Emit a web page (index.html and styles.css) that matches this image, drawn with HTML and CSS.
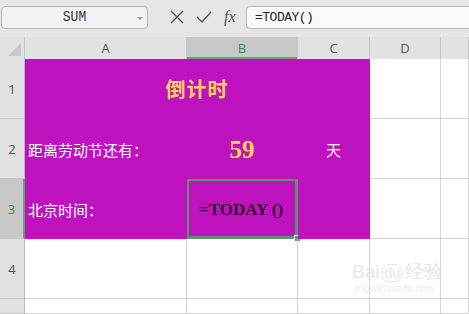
FILE: index.html
```html
<!DOCTYPE html>
<html lang="en">
<head>
    <meta charset="UTF-8" />
    <title>倒计时</title>
    <link rel="stylesheet" href="styles.css">
</head>
<body>
    <div class="toolbar">
        <div class="namebox">
            <span class="namebox__text">SUM</span>
            <span class="namebox__arrow"></span>
        </div>
        <div class="tools">
            <svg class="tool" width="16" height="16" viewBox="0 0 16 16"><path d="M2 2 L14 14 M14 2 L2 14" stroke="#555" stroke-width="1.4" fill="none"/></svg>
            <svg class="tool" width="18" height="16" viewBox="0 0 18 16"><path d="M2 8 L7 13 L16 3" stroke="#555" stroke-width="1.4" fill="none"/></svg>
            <span class="tool tool--fx">fx</span>
        </div>
        <div class="formula">=TODAY()</div>
    </div>

    <div class="sheet">
        <div class="corner"><span class="corner__tri"></span></div>
        <div class="colhead">A</div>
        <div class="colhead colhead--active">B</div>
        <div class="colhead">C</div>
        <div class="colhead">D</div>
        <div class="colhead"></div>

        <div class="rowhead">1</div>
        <div class="cell cell--fill cell--span3 cell--title">倒计时</div>
        <div class="cell"></div>
        <div class="cell"></div>

        <div class="rowhead">2</div>
        <div class="cell cell--fill cell--label">距离劳动节还有：</div>
        <div class="cell cell--fill cell--num">59</div>
        <div class="cell cell--fill cell--unit">天</div>
        <div class="cell"></div>
        <div class="cell"></div>

        <div class="rowhead rowhead--active">3</div>
        <div class="cell cell--fill cell--label">北京时间：</div>
        <div class="cell cell--fill cell--selected"><span class="cell__formula">=TODAY ()</span><span class="handle"></span></div>
        <div class="cell cell--fill"></div>
        <div class="cell"></div>
        <div class="cell"></div>

        <div class="rowhead">4</div>
        <div class="cell"></div>
        <div class="cell"></div>
        <div class="cell"></div>
        <div class="cell cell--mark">
            <span class="watermark">Bai<span class="watermark__du">du</span>经验</span>
            <span class="watermark__url">jingyan.baidu.com</span>
        </div>
        <div class="cell"></div>

        <div class="rowhead"></div>
        <div class="cell"></div>
        <div class="cell"></div>
        <div class="cell"></div>
        <div class="cell"></div>
        <div class="cell"></div>
    </div>
</body>
</html>
```

FILE: styles.css
```css
body {
    margin: 0;
    width: 469px;
    height: 314px;
    overflow: hidden;
    background: #fff;
    font-family: "Noto Sans CJK SC", sans-serif;
}

.toolbar {
    height: 37px;
    box-sizing: border-box;
    display: flex;
    align-items: center;
    padding: 0 0 3px 1px;
    background: #e6e6e6;
}

.namebox {
    width: 147px;
    height: 23px;
    box-sizing: border-box;
    display: flex;
    align-items: center;
    justify-content: center;
    position: relative;
    background: #f2f2f2;
    border: 1px solid #b9b9b9;
    border-radius: 4px;
}

.namebox__text {
    font-family: "Liberation Mono", monospace;
    font-size: 13px;
    color: #333;
    transform: scaleY(1.1);
}

.namebox__arrow {
    position: absolute;
    right: 4px;
    top: 10px;
    border-left: 3px solid transparent;
    border-right: 3px solid transparent;
    border-top: 3px solid #999;
}

.tools {
    width: 98px;
    display: flex;
    align-items: center;
    gap: 10px;
    padding-left: 21px;
    box-sizing: border-box;
}

.tool--fx {
    font-family: "Liberation Serif", serif;
    font-style: italic;
    font-size: 16px;
    color: #555;
    line-height: 16px;
    margin-left: 1px;
}

.formula {
    flex: 1;
    height: 23px;
    box-sizing: border-box;
    padding: 3px 0 0 8px;
    background: #fafafa;
    border: 1px solid #b9b9b9;
    border-right: 0;
    border-radius: 4px 0 0 4px;
    font-family: "Liberation Mono", monospace;
    font-size: 13px;
    letter-spacing: -0.5px;
    color: #222;
}

.sheet {
    display: grid;
    grid-template-columns: 25px 162px 111px 72px 71px 1fr;
    grid-template-rows: 22px 60px 60px 60px 60px 15px;
}

.corner {
    background: #e2e2e2;
    border-right: 1px solid #c4c4c4;
    position: relative;
}

.corner__tri {
    position: absolute;
    right: 3px;
    bottom: 3px;
    width: 0;
    height: 0;
    border-left: 13px solid transparent;
    border-bottom: 13px solid #c9c9c9;
}

.colhead {
    background: #e2e2e2;
    border-right: 1px solid #c8c8c8;
    display: flex;
    align-items: center;
    justify-content: center;
    font-family: "Open Sans", sans-serif;
    font-size: 13px;
    color: #555;
}

.colhead--active {
    background: #c8c8c8;
    color: #3f8a4f;
    box-shadow: inset 0 -2px 0 #6a9e73;
}

.rowhead {
    background: #e2e2e2;
    border-bottom: 1px solid #c8c8c8;
    border-right: 1px solid #b8b8b8;
    display: flex;
    align-items: center;
    justify-content: center;
    font-family: "Open Sans", sans-serif;
    font-size: 13px;
    color: #555;
}

.rowhead--active {
    background: #c8c8c8;
    color: #3f8a4f;
    border-right: 2px solid #6a9e73;
}

.cell {
    border-right: 1px solid #d4d4d4;
    border-bottom: 1px solid #d4d4d4;
    display: flex;
    align-items: center;
    position: relative;
}

.cell--fill {
    background: #bf12bf;
    border-color: #bf12bf;
}

.cell--span3 {
    grid-column: span 3;
}

.cell--title {
    justify-content: center;
    color: #f8d35a;
    font-size: 20px;
    font-weight: bold;
    letter-spacing: 1px;
}

.cell--label {
    padding-left: 3px;
    padding-top: 2px;
    color: #fff;
    font-size: 15px;
}

.cell--num {
    justify-content: center;
    padding-top: 2px;
    color: #f8d35a;
    font-family: "Liberation Serif", serif;
    font-weight: bold;
    font-size: 25px;
}

.cell--unit {
    justify-content: center;
    padding-top: 2px;
    color: #fff;
    font-size: 15px;
}

.cell--selected {
    border-color: #62906a;
    box-shadow: inset 0 0 0 2px #62906a;
}

.cell__formula {
    padding-left: 12px;
    padding-top: 2px;
    font-family: "Liberation Serif", serif;
    font-weight: bold;
    font-size: 17px;
    white-space: pre;
    color: #3a0838;
}

.handle {
    position: absolute;
    right: -4px;
    bottom: -4px;
    width: 5px;
    height: 5px;
    background: #4f9a5c;
    border: 1px solid #fff;
}

.watermark {
    position: absolute;
    left: -18px;
    top: 20px;
    font-family: "Liberation Sans", sans-serif;
    font-size: 19px;
    color: #e6e6e6;
    white-space: nowrap;
}

.watermark__du {
    font-size: 14px;
    padding: 0 2px;
    border: 1px solid #e6e6e6;
    border-radius: 8px;
    margin: 0 2px;
}

.watermark__url {
    position: absolute;
    left: -16px;
    top: 44px;
    font-family: "Liberation Sans", sans-serif;
    font-size: 10px;
    color: #ededed;
    white-space: nowrap;
}
```
